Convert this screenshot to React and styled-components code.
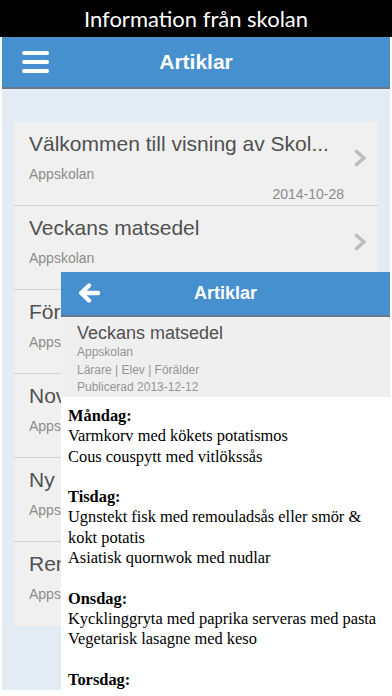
import React from 'react'
import styled, { createGlobalStyle } from 'styled-components'

const articles = [
    { title: 'Välkommen till visning av Skol...', source: 'Appskolan', date: '2014-10-28' },
    { title: 'Veckans matsedel', source: 'Appskolan' },
    { title: 'Föräldramöte', source: 'Appskolan' },
    { title: 'Novemberlov', source: 'Appskolan' },
    { title: 'Ny hemsida', source: 'Appskolan' },
    { title: 'Renovering', source: 'Appskolan' },
]

const menu = [
    { day: 'Måndag:', dishes: ['Varmkorv med kökets potatismos', 'Cous couspytt med vitlökssås'] },
    { day: 'Tisdag:', dishes: ['Ugnstekt fisk med remouladsås eller smör & kokt potatis', 'Asiatisk quornwok med nudlar'] },
    { day: 'Onsdag:', dishes: ['Kycklinggryta med paprika serveras med pasta', 'Vegetarisk lasagne med keso'] },
    { day: 'Torsdag:', dishes: [] },
]

const App = () => {
    return (
        <>
            <GlobalStyle />
            <Caption>Information från skolan</Caption>
            <Screen>
                <Header>
                    <MenuButton>
                        <span /><span /><span />
                    </MenuButton>
                    <HeaderTitle>Artiklar</HeaderTitle>
                </Header>
                <List>
                    {articles.map((a, i) => (
                        <Item key={i}>
                            <ItemRow>
                                <ItemText>
                                    <ItemTitle>{a.title}</ItemTitle>
                                    <ItemSource>{a.source}</ItemSource>
                                </ItemText>
                                <Chevron viewBox="0 0 13 18">
                                    <polyline points="2.5,2.5 10,9 2.5,15.5" />
                                </Chevron>
                            </ItemRow>
                            {a.date && <ItemDate>{a.date}</ItemDate>}
                        </Item>
                    ))}
                </List>

                <Detail>
                    <DetailHeader>
                        <BackArrow viewBox="0 0 22 20">
                            <path d="M20 10 H4 M11 2.5 L3.2 10 L11 17.5" />
                        </BackArrow>
                        <DetailHeaderTitle>Artiklar</DetailHeaderTitle>
                    </DetailHeader>
                    <Meta>
                        <MetaTitle>Veckans matsedel</MetaTitle>
                        <MetaLine>Appskolan</MetaLine>
                        <MetaLine>Lärare | Elev | Förälder</MetaLine>
                        <MetaLine>Publicerad 2013-12-12</MetaLine>
                    </Meta>
                    <Body>
                        {menu.map((d, i) => (
                            <Day key={i}>
                                <DayName>{d.day}</DayName>
                                {d.dishes.map((dish, j) => (
                                    <Dish key={j}>{dish}</Dish>
                                ))}
                            </Day>
                        ))}
                    </Body>
                </Detail>
            </Screen>
        </>
    )
}

export default App

const GlobalStyle = createGlobalStyle`
    html, body {
        margin: 0;
        padding: 0;
        background: #fff;
        overflow: hidden;
    }
    * {
        box-sizing: border-box;
    }
`;

const Caption = styled.div`
    height: 37px;
    background: #000;
    color: #fff;
    font-family: Lato, "Open Sans", sans-serif;
    font-size: 22px;
    line-height: 37px;
    text-align: center;
`;

const Screen = styled.div`
    position: relative;
    margin: 0 2px;
    height: 653px;
    background: #e3ebf3;
    font-family: "Liberation Sans", Arial, sans-serif;
`;

const Header = styled.div`
    position: relative;
    height: 52px;
    background: #4790d0;
    border-bottom: 2px solid #66788a;
    display: flex;
    align-items: center;
    justify-content: center;
`;

const MenuButton = styled.div`
    position: absolute;
    left: 20px;
    top: 14px;
    width: 27px;
    display: flex;
    flex-direction: column;
    gap: 5px;
    span {
        display: block;
        height: 4px;
        border-radius: 2px;
        background: #fff;
    }
`;

const HeaderTitle = styled.div`
    color: #fff;
    font-size: 21px;
    font-weight: bold;
`;

const List = styled.div`
    margin: 33px 12px 0;
    background: #f0f0f0;
`;

const Item = styled.div`
    height: 84px;
    padding: 10px 11px 0 15px;
    border-bottom: 1px solid #d2d2d2;
    &:last-child {
        border-bottom: none;
    }
`;

const ItemRow = styled.div`
    display: flex;
    align-items: center;
    justify-content: space-between;
`;

const ItemText = styled.div`
    min-width: 0;
`;

const ItemTitle = styled.div`
    font-size: 21px;
    line-height: 24px;
    color: #505050;
    white-space: nowrap;
`;

const ItemSource = styled.div`
    margin-top: 9px;
    font-size: 14px;
    line-height: 18px;
    color: #8c8c8c;
`;

const Chevron = styled.svg`
    width: 13px;
    height: 18px;
    flex-shrink: 0;
    fill: none;
    stroke: #bdbdbd;
    stroke-width: 3.6;
    stroke-linecap: round;
    stroke-linejoin: round;
`;

const ItemDate = styled.div`
    margin-top: 2px;
    padding-right: 23px;
    text-align: right;
    font-size: 14px;
    line-height: 18px;
    color: #8c8c8c;
`;

const Detail = styled.div`
    position: absolute;
    top: 235px;
    left: 59px;
    right: 0;
    bottom: -6px;
    overflow: hidden;
    background: #fff;
`;

const DetailHeader = styled.div`
    position: relative;
    height: 45px;
    background: #4790d0;
    border-bottom: 2px solid #66788a;
    display: flex;
    align-items: center;
    justify-content: center;
`;

const BackArrow = styled.svg`
    position: absolute;
    left: 17px;
    top: 11px;
    width: 22px;
    height: 20px;
    fill: none;
    stroke: #fff;
    stroke-width: 4.4;
    stroke-linecap: round;
    stroke-linejoin: round;
`;

const DetailHeaderTitle = styled.div`
    color: #fff;
    font-size: 18px;
    font-weight: bold;
`;

const Meta = styled.div`
    height: 80px;
    padding: 5px 8px 0 16px;
    background: #efefef;
`;

const MetaTitle = styled.div`
    font-size: 18px;
    line-height: 22px;
    color: #505050;
`;

const MetaLine = styled.div`
    font-size: 12px;
    line-height: 17.5px;
    color: #959595;
`;

const Body = styled.div`
    padding: 9px 8px 0 7px;
    font-family: "Liberation Serif", "Times New Roman", serif;
    font-size: 16.4px;
    line-height: 20.3px;
    color: #000;
`;

const Day = styled.div`
    margin-bottom: 20.3px;
`;

const DayName = styled.div`
    font-weight: bold;
`;

const Dish = styled.div``;
